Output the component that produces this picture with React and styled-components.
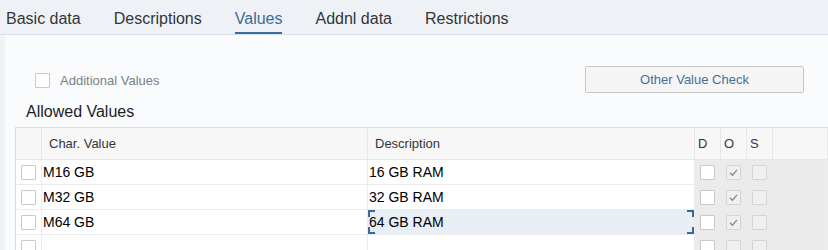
import React from "react";
import styled, { createGlobalStyle } from "styled-components";

const GlobalStyle = createGlobalStyle`
  body {
    margin: 0;
    background: #eef2f6;
    font-family: "Liberation Sans", Arial, sans-serif;
  }
`;

// 탭 영역
const Page = styled.div`
  width: 828px;
  height: 250px;
  overflow: hidden;
  display: flex;
  flex-direction: column;
`;

const TabBar = styled.div`
  height: 35px;
  display: flex;
  gap: 33px;
  padding-left: 6px;
  border-bottom: 1px solid #d6e0ea;
  box-sizing: border-box;
  flex-shrink: 0;
`;

const Tab = styled.div`
  display: flex;
  align-items: center;
  padding-top: 4px;
  font-size: 16px;
  color: ${(p) => (p.active ? "#3d6c98" : "#32363a")};
  box-shadow: ${(p) => (p.active ? "inset 0 -2px 0 #3d6c98" : "none")};
`;

const Panel = styled.div`
  flex: 1;
  margin-left: 5px;
  background: #f9fbfd;
  display: flex;
  flex-direction: column;
`;

const OptionsRow = styled.div`
  display: flex;
  justify-content: space-between;
  align-items: center;
  height: 27px;
  margin-top: 31px;
  padding-left: 30px;
  padding-right: 24px;
`;

const CheckLabel = styled.label`
  display: flex;
  align-items: center;
  gap: 10px;
  font-size: 13px;
  color: #7b7f83;
  margin-top: 1px;
`;

const Box = styled.span`
  display: inline-flex;
  align-items: center;
  justify-content: center;
  width: 13px;
  height: 13px;
  border: 1px solid ${(p) => (p.muted ? "#d4d4d4" : "#c9c9c9")};
  background: ${(p) => (p.muted ? "#f0f0f0" : "#fff")};
  border-radius: 1px;
  flex-shrink: 0;
`;

const Button = styled.button`
  width: 219px;
  height: 27px;
  background: #f5f5f5;
  border: 1px solid #c7c7c7;
  border-radius: 2px;
  color: #4a6d94;
  font-family: inherit;
  font-size: 13px;
  padding: 0;
`;

const Title = styled.h3`
  margin: 10px 0 0 21px;
  font-size: 16px;
  font-weight: normal;
  color: #1d1d1d;
  line-height: 18px;
`;

const Table = styled.div`
  margin: 6px 0 0 10px;
  border-top: 1px solid #dcdcdc;
  border-left: 1px solid #dcdcdc;
`;

const Row = styled.div`
  display: grid;
  grid-template-columns: 26px 326px 327px 26px 26px 26px 1fr;
  height: ${(p) => (p.header ? "32px" : "25px")};
  background: ${(p) => (p.header ? "#f7f7f7" : "#fff")};
`;

const Cell = styled.div`
  display: flex;
  align-items: center;
  justify-content: ${(p) => (p.center ? "center" : "flex-start")};
  position: relative;
  padding-left: ${(p) => (p.pad ? `${p.pad}px` : "0")};
  border-right: 1px solid ${(p) => (p.header ? "#e6e6e6" : "#ececec")};
  border-bottom: 1px solid ${(p) => (p.header ? "#e6e6e6" : "#ececec")};
  background: ${(p) =>
    p.grey ? "#ebebeb" : p.selected ? "#e8eef6" : "transparent"};
  font-size: ${(p) => (p.header ? "13px" : "14px")};
  color: ${(p) => (p.header ? "#32363a" : "#000")};
  white-space: nowrap;
  overflow: hidden;
`;

const Corner = styled.span`
  position: absolute;
  width: 5px;
  height: 5px;
  border-color: #3b6a98;
  border-style: solid;
  border-width: 0;
  ${(p) => (p.top ? "top: 0;" : "bottom: 0;")}
  ${(p) => (p.left ? "left: 0;" : "right: 0;")}
  ${(p) => (p.top ? "border-top-width: 2px;" : "border-bottom-width: 2px;")}
  ${(p) => (p.left ? "border-left-width: 2px;" : "border-right-width: 2px;")}
`;

const Check = () => (
  <svg width="11" height="11" viewBox="0 0 11 11">
    <polyline
      points="2,5.8 4.4,8.2 9,2.8"
      fill="none"
      stroke="#8a8a8a"
      strokeWidth="1.3"
    />
  </svg>
);

const rows = [
  { value: "M16 GB", desc: "16 GB RAM", o: true },
  { value: "M32 GB", desc: "32 GB RAM", o: true },
  { value: "M64 GB", desc: "64 GB RAM", o: true, selected: true },
  { value: "", desc: "", o: false },
];

const tabs = ["Basic data", "Descriptions", "Values", "Addnl data", "Restrictions"];

const App = () => {
  return (
    <Page>
      <GlobalStyle />
      <TabBar>
        {tabs.map((t) => (
          <Tab key={t} active={t === "Values"}>
            {t}
          </Tab>
        ))}
      </TabBar>
      <Panel>
        <OptionsRow>
          <CheckLabel>
            <Box />
            Additional Values
          </CheckLabel>
          <Button>Other Value Check</Button>
        </OptionsRow>
        <Title>Allowed Values</Title>
        <Table>
          <Row header>
            <Cell header />
            <Cell header pad={7}>Char. Value</Cell>
            <Cell header pad={7}>Description</Cell>
            <Cell header pad={3}>D</Cell>
            <Cell header pad={3}>O</Cell>
            <Cell header pad={3}>S</Cell>
            <Cell header />
          </Row>
          {rows.map((r, i) => (
            <Row key={i}>
              <Cell center>
                <Box />
              </Cell>
              <Cell pad={1}>{r.value}</Cell>
              <Cell pad={1} selected={r.selected}>
                {r.desc}
                {r.selected && (
                  <>
                    <Corner top left />
                    <Corner top />
                    <Corner left />
                    <Corner />
                  </>
                )}
              </Cell>
              <Cell grey center>
                <Box />
              </Cell>
              <Cell grey center>
                <Box muted>{r.o && <Check />}</Box>
              </Cell>
              <Cell grey center>
                <Box muted />
              </Cell>
              <Cell grey />
            </Row>
          ))}
        </Table>
      </Panel>
    </Page>
  );
};

export default App;
